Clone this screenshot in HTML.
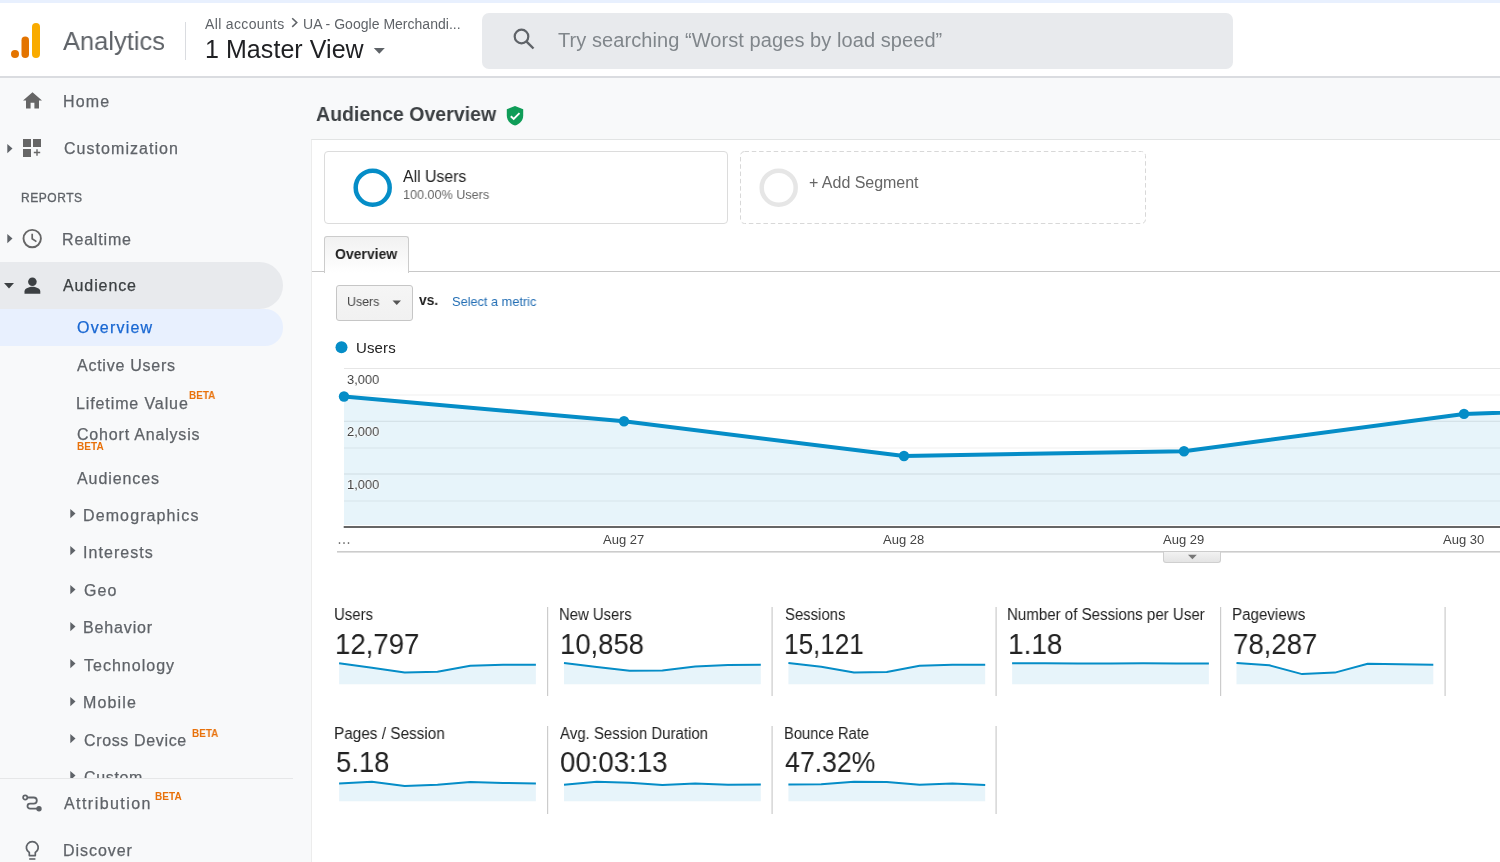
<!DOCTYPE html>
<html><head><meta charset="utf-8"><title>Analytics</title>
<style>
html,body{margin:0;padding:0;width:1500px;height:862px;overflow:hidden;background:#fff;}
body{position:relative;font-family:"Liberation Sans",sans-serif;}
.a{position:absolute;}
.t{position:absolute;white-space:nowrap;will-change:transform;}
</style></head><body>
<div class="a" style="left:0px;top:0px;width:1500px;height:3px;background:#e8f0fe;"></div>
<div class="a" style="left:0px;top:77.5px;width:1500px;height:785px;background:#f8f9fa;"></div>
<div class="a" style="left:0px;top:76px;width:1500px;height:1.5px;background:#dadce0;"></div>
<svg class="a" style="left:0;top:0" width="60" height="76">
<circle cx="15" cy="54" r="4" fill="#e37400"/>
<rect x="21.5" y="36.5" width="7.5" height="21.5" rx="3.75" fill="#e37400"/>
<rect x="32" y="23" width="8" height="35" rx="4" fill="#f9ab00"/>
</svg>
<div class="t" style="left:63.40px;top:28.00px;font-size:26px;line-height:26px;color:#5f6368;transform:scaleX(0.9804);transform-origin:0 0;">Analytics</div>
<div class="a" style="left:185px;top:22px;width:1px;height:38px;background:#dadce0;"></div>
<div class="t" style="left:205.00px;top:17.00px;font-size:14px;line-height:14px;color:#5f6368;letter-spacing:0.347px;">All accounts</div>
<svg class="a" style="left:288px;top:16px" width="12" height="14"><path d="M4.2 2.3 L8.8 6.6 L4.2 10.9" fill="none" stroke="#5f6368" stroke-width="1.5"/></svg>
<div class="t" style="left:303.20px;top:17.00px;font-size:14px;line-height:14px;color:#5f6368;letter-spacing:0.019px;">UA - Google Merchandi...</div>
<div class="t" style="left:204.90px;top:37.00px;font-size:25px;line-height:25px;color:#202124;letter-spacing:0.060px;">1 Master View</div>
<svg class="a" style="left:373px;top:47.6px" width="13" height="7"><path d="M0.8 0 L11.8 0 L6.3 5.7 Z" fill="#5f6368"/></svg>
<div class="a" style="left:482px;top:13px;width:751px;height:55.5px;background:#e8eaed;border-radius:7px;"></div>
<svg class="a" style="left:510px;top:25.4px" width="28" height="28"><circle cx="11.5" cy="11.5" r="6.8" fill="none" stroke="#5f6368" stroke-width="2.2"/><path d="M16.3 16.3 L23.5 23.5" stroke="#5f6368" stroke-width="2.4"/></svg>
<div class="t" style="left:558.00px;top:30.00px;font-size:20px;line-height:20px;color:#80868b;letter-spacing:0.074px;">Try searching “Worst pages by load speed”</div>
<div class="a" style="left:0px;top:262px;width:283px;height:47px;background:#e8eaed;border-radius:0 23.5px 23.5px 0;"></div>
<div class="a" style="left:0px;top:309px;width:283px;height:36.5px;background:#e8f0fe;border-radius:0 18px 18px 0;"></div>
<svg class="a" style="left:22px;top:91px" width="22" height="19"><path d="M10.5 1.2 L1 9.6 L4 9.6 L4 17.6 L8.6 17.6 L8.6 11.8 L12.4 11.8 L12.4 17.6 L17 17.6 L17 9.6 L20 9.6 Z" fill="#666666"/></svg>
<div class="t" style="left:62.50px;top:94.00px;font-size:16px;line-height:16px;color:#5f6368;letter-spacing:1.140px;-webkit-text-stroke:0.25px currentColor;">Home</div>
<svg class="a" style="left:6.6px;top:143.6px" width="7" height="10"><path d="M0.3 0 L5.5 4.6 L0.3 9.2 Z" fill="#5f6368"/></svg>
<svg class="a" style="left:22px;top:138px" width="22" height="20"><rect x="1" y="1" width="8" height="8" fill="#666666"/><rect x="11" y="1" width="8" height="8" fill="#666666"/><rect x="1" y="11" width="8" height="8" fill="#666666"/><path d="M15 11.3 V17.7 M11.8 14.5 H18.2" stroke="#666666" stroke-width="1.4"/></svg>
<div class="t" style="left:63.50px;top:141.00px;font-size:16px;line-height:16px;color:#5f6368;letter-spacing:1.044px;-webkit-text-stroke:0.25px currentColor;">Customization</div>
<div class="t" style="left:21.00px;top:192.00px;font-size:12px;line-height:12px;color:#5f6368;letter-spacing:0.535px;-webkit-text-stroke:0.3px currentColor;">REPORTS</div>
<svg class="a" style="left:7px;top:233.7px" width="7" height="10"><path d="M0.3 0 L5.5 4.6 L0.3 9.2 Z" fill="#5f6368"/></svg>
<svg class="a" style="left:21px;top:228px" width="22" height="22"><circle cx="11.2" cy="10.6" r="8.7" fill="none" stroke="#666666" stroke-width="1.9"/><path d="M11.2 5.8 V10.8 L15.4 13.6" fill="none" stroke="#666666" stroke-width="1.7"/></svg>
<div class="t" style="left:62.30px;top:232.00px;font-size:16px;line-height:16px;color:#5f6368;letter-spacing:0.838px;-webkit-text-stroke:0.25px currentColor;">Realtime</div>
<svg class="a" style="left:3px;top:282px" width="12" height="8"><path d="M1 1 L11 1 L6 6.5 Z" fill="#3c4043"/></svg>
<svg class="a" style="left:23px;top:276px" width="19" height="19"><circle cx="9.4" cy="5.8" r="4.3" fill="#3c4043"/><path d="M1.5 17.7 V15.5 C1.5 12.3 6.5 10.8 9.4 10.8 C12.3 10.8 17.3 12.3 17.3 15.5 V17.7 Z" fill="#3c4043"/></svg>
<div class="t" style="left:63.30px;top:278.00px;font-size:16px;line-height:16px;color:#3c4043;letter-spacing:0.897px;-webkit-text-stroke:0.25px currentColor;">Audience</div>
<div class="t" style="left:77.00px;top:320.00px;font-size:16px;line-height:16px;color:#1967d2;letter-spacing:1.196px;-webkit-text-stroke:0.25px currentColor;">Overview</div>
<div class="t" style="left:77.00px;top:358.00px;font-size:16px;line-height:16px;color:#5f6368;letter-spacing:0.746px;-webkit-text-stroke:0.25px currentColor;">Active Users</div>
<div class="t" style="left:76.00px;top:396.00px;font-size:16px;line-height:16px;color:#5f6368;letter-spacing:0.892px;-webkit-text-stroke:0.25px currentColor;">Lifetime Value</div>
<div class="t" style="left:189.00px;top:391.00px;font-size:10px;line-height:10px;color:#e8710a;font-weight:700;transform:scaleX(0.9902);transform-origin:0 0;">BETA</div>
<div class="t" style="left:77.00px;top:427.00px;font-size:16px;line-height:16px;color:#5f6368;letter-spacing:0.811px;-webkit-text-stroke:0.25px currentColor;">Cohort Analysis</div>
<div class="t" style="left:77.00px;top:442.00px;font-size:10px;line-height:10px;color:#e8710a;font-weight:700;letter-spacing:0.081px;">BETA</div>
<div class="t" style="left:77.00px;top:471.00px;font-size:16px;line-height:16px;color:#5f6368;letter-spacing:0.910px;-webkit-text-stroke:0.25px currentColor;">Audiences</div>
<svg class="a" style="left:69.8px;top:508.5px" width="7" height="10"><path d="M0.3 0 L5.5 4.6 L0.3 9.2 Z" fill="#5f6368"/></svg>
<div class="t" style="left:83.40px;top:508.00px;font-size:16px;line-height:16px;color:#5f6368;letter-spacing:1.113px;-webkit-text-stroke:0.25px currentColor;">Demographics</div>
<svg class="a" style="left:69.8px;top:546.4px" width="7" height="10"><path d="M0.3 0 L5.5 4.6 L0.3 9.2 Z" fill="#5f6368"/></svg>
<div class="t" style="left:83.40px;top:545.00px;font-size:16px;line-height:16px;color:#5f6368;letter-spacing:1.055px;-webkit-text-stroke:0.25px currentColor;">Interests</div>
<svg class="a" style="left:69.8px;top:584.8px" width="7" height="10"><path d="M0.3 0 L5.5 4.6 L0.3 9.2 Z" fill="#5f6368"/></svg>
<div class="t" style="left:84.40px;top:583.00px;font-size:16px;line-height:16px;color:#5f6368;letter-spacing:1.128px;-webkit-text-stroke:0.25px currentColor;">Geo</div>
<svg class="a" style="left:69.8px;top:621.5px" width="7" height="10"><path d="M0.3 0 L5.5 4.6 L0.3 9.2 Z" fill="#5f6368"/></svg>
<div class="t" style="left:83.40px;top:620.00px;font-size:16px;line-height:16px;color:#5f6368;letter-spacing:0.854px;-webkit-text-stroke:0.25px currentColor;">Behavior</div>
<svg class="a" style="left:69.8px;top:659.0999999999999px" width="7" height="10"><path d="M0.3 0 L5.5 4.6 L0.3 9.2 Z" fill="#5f6368"/></svg>
<div class="t" style="left:84.40px;top:658.00px;font-size:16px;line-height:16px;color:#5f6368;letter-spacing:1.017px;-webkit-text-stroke:0.25px currentColor;">Technology</div>
<svg class="a" style="left:69.8px;top:696.8px" width="7" height="10"><path d="M0.3 0 L5.5 4.6 L0.3 9.2 Z" fill="#5f6368"/></svg>
<div class="t" style="left:83.40px;top:695.00px;font-size:16px;line-height:16px;color:#5f6368;letter-spacing:1.133px;-webkit-text-stroke:0.25px currentColor;">Mobile</div>
<svg class="a" style="left:69.8px;top:734.0999999999999px" width="7" height="10"><path d="M0.3 0 L5.5 4.6 L0.3 9.2 Z" fill="#5f6368"/></svg>
<div class="t" style="left:84.40px;top:733.00px;font-size:16px;line-height:16px;color:#5f6368;letter-spacing:0.642px;-webkit-text-stroke:0.25px currentColor;">Cross Device</div>
<div class="t" style="left:192.40px;top:729.00px;font-size:10px;line-height:10px;color:#e8710a;font-weight:700;transform:scaleX(0.9902);transform-origin:0 0;">BETA</div>
<div class="a" style="left:0;top:0;width:311px;height:778px;overflow:hidden"><svg class="a" style="left:69.8px;top:770.7px" width="7" height="10"><path d="M0.3 0 L5.5 4.6 L0.3 9.2 Z" fill="#5f6368"/></svg>
<div class="t" style="left:84.40px;top:770.00px;font-size:16px;line-height:16px;color:#5f6368;letter-spacing:0.641px;-webkit-text-stroke:0.25px currentColor;">Custom</div>
</div>
<div class="a" style="left:0px;top:777.8px;width:293px;height:1.4px;background:#e6e7e8;"></div>
<svg class="a" style="left:21px;top:793px" width="22" height="22"><circle cx="4.2" cy="4.5" r="2.1" fill="none" stroke="#5f6368" stroke-width="1.7"/><path d="M6.4 4.5 H12.7 A3.1 3.1 0 0 1 12.7 10.7 H9 A2.5 2.5 0 0 0 9 15.7 H16" fill="none" stroke="#5f6368" stroke-width="1.8"/><circle cx="18" cy="15.7" r="2.7" fill="#5f6368"/></svg>
<div class="t" style="left:63.50px;top:796.00px;font-size:16px;line-height:16px;color:#5f6368;letter-spacing:1.436px;-webkit-text-stroke:0.25px currentColor;">Attribution</div>
<div class="t" style="left:154.50px;top:792.00px;font-size:10px;line-height:10px;color:#e8710a;font-weight:700;letter-spacing:0.081px;">BETA</div>
<svg class="a" style="left:22px;top:838px" width="20" height="24"><path d="M7.3 17.6 V14.6 A5.9 5.9 0 1 1 13.3 14.6 V17.6 Z" fill="none" stroke="#5f6368" stroke-width="1.7" stroke-linejoin="round"/><path d="M7.2 21 H13.4" stroke="#5f6368" stroke-width="1.6"/></svg>
<div class="t" style="left:62.50px;top:843.00px;font-size:16px;line-height:16px;color:#5f6368;letter-spacing:0.942px;-webkit-text-stroke:0.25px currentColor;">Discover</div>
<div class="a" style="left:311px;top:139px;width:1189px;height:723px;background:#ffffff;border-left:1px solid #ececec;border-top:1px solid #e2e4e4;box-sizing:border-box;"></div>
<div class="t" style="left:315.70px;top:103.00px;font-size:21px;line-height:21px;color:#3c4043;font-weight:700;transform:scaleX(0.9295);transform-origin:0 0;">Audience Overview</div>
<svg class="a" style="left:505px;top:105px" width="20" height="22"><path d="M10 1 L18.2 4.3 V10.5 C18.2 15.3 14.8 19.3 10 20.5 C5.2 19.3 1.8 15.3 1.8 10.5 V4.3 Z" fill="#0f9d58"/><path d="M5.8 11.2 L8.7 14 L14.5 8.2" fill="none" stroke="#fff" stroke-width="1.9"/></svg>
<div class="a" style="left:324px;top:151px;width:404px;height:73px;background:#fff;border:1px solid #dcdcdc;border-radius:4px;box-sizing:border-box;"></div>
<svg class="a" style="left:350px;top:165px" width="46" height="46"><circle cx="22.7" cy="22.7" r="17" fill="none" stroke="#058dc7" stroke-width="4.5"/></svg>
<div class="t" style="left:402.70px;top:169.00px;font-size:16px;line-height:16px;color:#222222;transform:scaleX(0.9889);transform-origin:0 0;">All Users</div>
<div class="t" style="left:402.70px;top:188.00px;font-size:13px;line-height:13px;color:#666666;transform:scaleX(0.9689);transform-origin:0 0;">100.00% Users</div>
<svg class="a" style="left:0;top:0" width="1500" height="240"><rect x="740.5" y="151.5" width="405" height="72" rx="4" fill="#fff" stroke="#d8d8d8" stroke-width="1" stroke-dasharray="4.5 2.8"/></svg>
<svg class="a" style="left:756px;top:165px" width="46" height="46"><circle cx="22.7" cy="22.7" r="17" fill="none" stroke="#e6e6e6" stroke-width="4.5"/></svg>
<div class="t" style="left:809.00px;top:175.00px;font-size:16px;line-height:16px;color:#666666;letter-spacing:-0.025px;">+ Add Segment</div>
<div class="a" style="left:312px;top:271px;width:1188px;height:1px;background:#c8c8c8;"></div>
<div class="a" style="left:324px;top:236px;width:85px;height:37px;background:linear-gradient(#f1f1f1,#ffffff);border:1px solid #cccccc;border-bottom:none;border-radius:3px 3px 0 0;box-sizing:border-box;"></div>
<div class="t" style="left:334.80px;top:246.00px;font-size:15px;line-height:15px;color:#222222;font-weight:700;transform:scaleX(0.9323);transform-origin:0 0;">Overview</div>
<div class="a" style="left:336px;top:284.5px;width:77px;height:36px;background:linear-gradient(#f5f5f5,#f1f1f1);border:1px solid #c6c6c6;border-radius:3px;box-sizing:border-box;"></div>
<div class="t" style="left:347.25px;top:295.00px;font-size:13px;line-height:13px;color:#444444;transform:scaleX(0.9508);transform-origin:0 0;">Users</div>
<svg class="a" style="left:391.5px;top:300.3px" width="10" height="6"><path d="M0.5 0.5 L9 0.5 L4.75 5 Z" fill="#555"/></svg>
<div class="t" style="left:418.60px;top:293.00px;font-size:14px;line-height:14px;color:#222222;font-weight:700;transform:scaleX(0.9853);transform-origin:0 0;">vs.</div>
<div class="t" style="left:451.50px;top:295.00px;font-size:13px;line-height:13px;color:#236eb4;transform:scaleX(0.9807);transform-origin:0 0;">Select a metric</div>
<svg class="a" style="left:334px;top:340px" width="15" height="15"><circle cx="7.5" cy="7.3" r="6" fill="#058dc7"/></svg>
<div class="t" style="left:356.00px;top:340.00px;font-size:15px;line-height:15px;color:#222222;letter-spacing:0.133px;">Users</div>
<svg class="a" style="left:0;top:0" width="1500" height="862"><defs><clipPath id="cc"><rect x="336" y="360" width="1164" height="180"/></clipPath></defs><rect x="344" y="368.0" width="1156" height="1" fill="#e6e6e6"/><rect x="344" y="394.5" width="1156" height="1" fill="#efefef"/><rect x="344" y="420.8" width="1156" height="1" fill="#e6e6e6"/><rect x="344" y="447.5" width="1156" height="1" fill="#efefef"/><rect x="344" y="473.5" width="1156" height="1" fill="#e6e6e6"/><rect x="344" y="500.5" width="1156" height="1" fill="#efefef"/><g clip-path="url(#cc)"><path d="M344,396.5 L624,421.3 L904,456 L1184,451.2 L1464,413.9 L1744,404.7 L1744,525 L344,525 Z" fill="#058dc7" fill-opacity="0.095"/><path d="M344,396.5 L624,421.3 L904,456 L1184,451.2 L1464,413.9 L1744,404.7" fill="none" stroke="#058dc7" stroke-width="4" stroke-linejoin="round"/><circle cx="344" cy="396.5" r="5.2" fill="#058dc7"/><circle cx="624" cy="421.3" r="5.2" fill="#058dc7"/><circle cx="904" cy="456" r="5.2" fill="#058dc7"/><circle cx="1184" cy="451.2" r="5.2" fill="#058dc7"/><circle cx="1464" cy="413.9" r="5.2" fill="#058dc7"/><circle cx="1744" cy="404.7" r="5.2" fill="#058dc7"/></g><rect x="343.7" y="526" width="1156.3" height="2" fill="#666666"/><rect x="337" y="551" width="1163" height="1.6" fill="#cccccc"/><rect x="338.8" y="542.3" width="1.4" height="1.5" fill="#555"/><rect x="343.3" y="542.3" width="1.4" height="1.5" fill="#555"/><rect x="347.8" y="542.3" width="1.4" height="1.5" fill="#555"/></svg>
<div class="t" style="left:347.30px;top:373.00px;font-size:13px;line-height:13px;color:#444444;transform:scaleX(0.9907);transform-origin:0 0;text-shadow:0 0 2px #fff,0 0 2px #fff,0 0 2px #fff;">3,000</div>
<div class="t" style="left:347.30px;top:425.00px;font-size:13px;line-height:13px;color:#444444;transform:scaleX(0.9907);transform-origin:0 0;text-shadow:0 0 2px #fff,0 0 2px #fff,0 0 2px #fff;">2,000</div>
<div class="t" style="left:347.30px;top:478.00px;font-size:13px;line-height:13px;color:#444444;transform:scaleX(0.9907);transform-origin:0 0;text-shadow:0 0 2px #fff,0 0 2px #fff,0 0 2px #fff;">1,000</div>
<div class="t" style="left:603.40px;top:533.00px;font-size:13px;line-height:13px;color:#444444;">Aug 27</div>
<div class="t" style="left:883.40px;top:533.00px;font-size:13px;line-height:13px;color:#444444;">Aug 28</div>
<div class="t" style="left:1163.40px;top:533.00px;font-size:13px;line-height:13px;color:#444444;">Aug 29</div>
<div class="t" style="left:1443.40px;top:533.00px;font-size:13px;line-height:13px;color:#444444;">Aug 30</div>
<div class="a" style="left:1163px;top:551.5px;width:58px;height:11.5px;background:linear-gradient(#f2f2f2,#e4e4e4);border:1px solid #cfcfcf;border-top:none;border-radius:0 0 3px 3px;box-sizing:border-box;"></div>
<svg class="a" style="left:1187px;top:554px" width="11" height="7"><path d="M1 0.8 L9.8 0.8 L5.4 5.3 Z" fill="#777"/></svg>
<div class="t" style="left:334.37px;top:607.00px;font-size:16px;line-height:16px;color:#222222;transform:scaleX(0.9343);transform-origin:0 0;">Users</div>
<div class="t" style="left:335.40px;top:630.00px;font-size:29px;line-height:29px;color:#222222;transform:scaleX(0.9513);transform-origin:0 0;">12,797</div>
<div class="t" style="left:559.27px;top:607.00px;font-size:16px;line-height:16px;color:#222222;transform:scaleX(0.9283);transform-origin:0 0;">New Users</div>
<div class="t" style="left:559.81px;top:630.00px;font-size:29px;line-height:29px;color:#222222;transform:scaleX(0.9466);transform-origin:0 0;">10,858</div>
<div class="t" style="left:784.60px;top:607.00px;font-size:16px;line-height:16px;color:#222222;transform:scaleX(0.9303);transform-origin:0 0;">Sessions</div>
<div class="t" style="left:784.45px;top:630.00px;font-size:29px;line-height:29px;color:#222222;transform:scaleX(0.8998);transform-origin:0 0;">15,121</div>
<div class="t" style="left:1007.36px;top:607.00px;font-size:16px;line-height:16px;color:#222222;transform:scaleX(0.9421);transform-origin:0 0;">Number of Sessions per User</div>
<div class="t" style="left:1008.37px;top:630.00px;font-size:29px;line-height:29px;color:#222222;transform:scaleX(0.9641);transform-origin:0 0;">1.18</div>
<div class="t" style="left:1231.75px;top:607.00px;font-size:16px;line-height:16px;color:#222222;transform:scaleX(0.9466);transform-origin:0 0;">Pageviews</div>
<div class="t" style="left:1232.75px;top:630.00px;font-size:29px;line-height:29px;color:#222222;transform:scaleX(0.9507);transform-origin:0 0;">78,287</div>
<div class="t" style="left:334.34px;top:726.00px;font-size:16px;line-height:16px;color:#222222;transform:scaleX(0.9584);transform-origin:0 0;">Pages / Session</div>
<div class="t" style="left:336.35px;top:748.00px;font-size:29px;line-height:29px;color:#222222;transform:scaleX(0.9463);transform-origin:0 0;">5.18</div>
<div class="t" style="left:560.20px;top:726.00px;font-size:16px;line-height:16px;color:#222222;transform:scaleX(0.9369);transform-origin:0 0;">Avg. Session Duration</div>
<div class="t" style="left:559.95px;top:748.00px;font-size:29px;line-height:29px;color:#222222;transform:scaleX(0.9525);transform-origin:0 0;">00:03:13</div>
<div class="t" style="left:783.68px;top:726.00px;font-size:16px;line-height:16px;color:#222222;transform:scaleX(0.9191);transform-origin:0 0;">Bounce Rate</div>
<div class="t" style="left:784.50px;top:748.00px;font-size:29px;line-height:29px;color:#222222;transform:scaleX(0.9193);transform-origin:0 0;">47.32%</div>
<svg class="a" style="left:0;top:0" width="1500" height="862"><path d="M339.1,663.2 L371.9,667.8 L404.7,672.4 L437.5,671.7 L470.3,665.8 L503.1,664.7 L535.9,664.7 L535.9,684.2 L339.1,684.2 Z" fill="#058dc7" fill-opacity="0.095"/><path d="M339.1,663.2 L371.9,667.8 L404.7,672.4 L437.5,671.7 L470.3,665.8 L503.1,664.7 L535.9,664.7" fill="none" stroke="#058dc7" stroke-width="2" stroke-linejoin="round"/><rect x="547.0" y="607" width="1.2" height="89" fill="#cccccc"/><path d="M564.0,663.1 L596.8,667.0 L629.6,670.8 L662.4,670.4 L695.2,666.4 L728.0,665.0 L760.8,664.8 L760.8,684.2 L564.0,684.2 Z" fill="#058dc7" fill-opacity="0.095"/><path d="M564.0,663.1 L596.8,667.0 L629.6,670.8 L662.4,670.4 L695.2,666.4 L728.0,665.0 L760.8,664.8" fill="none" stroke="#058dc7" stroke-width="2" stroke-linejoin="round"/><rect x="771.5" y="607" width="1.2" height="89" fill="#cccccc"/><path d="M788.4,663.1 L821.2,666.7 L854.0,672.6 L886.8,671.9 L919.6,665.7 L952.4,664.8 L985.2,664.8 L985.2,684.2 L788.4,684.2 Z" fill="#058dc7" fill-opacity="0.095"/><path d="M788.4,663.1 L821.2,666.7 L854.0,672.6 L886.8,671.9 L919.6,665.7 L952.4,664.8 L985.2,664.8" fill="none" stroke="#058dc7" stroke-width="2" stroke-linejoin="round"/><rect x="995.5" y="607" width="1.2" height="89" fill="#cccccc"/><path d="M1012.1,663.2 L1044.9,663.3 L1077.7,663.6 L1110.5,663.6 L1143.3,663.2 L1176.1,663.4 L1208.9,663.4 L1208.9,684.2 L1012.1,684.2 Z" fill="#058dc7" fill-opacity="0.095"/><path d="M1012.1,663.2 L1044.9,663.3 L1077.7,663.6 L1110.5,663.6 L1143.3,663.2 L1176.1,663.4 L1208.9,663.4" fill="none" stroke="#058dc7" stroke-width="2" stroke-linejoin="round"/><rect x="1220.0" y="607" width="1.2" height="89" fill="#cccccc"/><path d="M1236.5,663.1 L1269.3,665.3 L1302.1,674.1 L1334.9,672.6 L1367.7,663.8 L1400.5,664.2 L1433.3,664.8 L1433.3,684.2 L1236.5,684.2 Z" fill="#058dc7" fill-opacity="0.095"/><path d="M1236.5,663.1 L1269.3,665.3 L1302.1,674.1 L1334.9,672.6 L1367.7,663.8 L1400.5,664.2 L1433.3,664.8" fill="none" stroke="#058dc7" stroke-width="2" stroke-linejoin="round"/><rect x="1444.5" y="607" width="1.2" height="89" fill="#cccccc"/><path d="M339.1,783.5 L371.9,781.7 L404.7,786.1 L437.5,784.7 L470.3,782.0 L503.1,782.9 L535.9,783.5 L535.9,801.2 L339.1,801.2 Z" fill="#058dc7" fill-opacity="0.095"/><path d="M339.1,783.5 L371.9,781.7 L404.7,786.1 L437.5,784.7 L470.3,782.0 L503.1,782.9 L535.9,783.5" fill="none" stroke="#058dc7" stroke-width="2" stroke-linejoin="round"/><rect x="547.0" y="726" width="1.2" height="88" fill="#cccccc"/><path d="M564.0,784.7 L596.8,781.7 L629.6,782.8 L662.4,785.0 L695.2,783.5 L728.0,784.7 L760.8,784.4 L760.8,801.2 L564.0,801.2 Z" fill="#058dc7" fill-opacity="0.095"/><path d="M564.0,784.7 L596.8,781.7 L629.6,782.8 L662.4,785.0 L695.2,783.5 L728.0,784.7 L760.8,784.4" fill="none" stroke="#058dc7" stroke-width="2" stroke-linejoin="round"/><rect x="771.5" y="726" width="1.2" height="88" fill="#cccccc"/><path d="M788.4,784.4 L821.2,784.2 L854.0,781.7 L886.8,782.0 L919.6,784.7 L952.4,783.5 L985.2,785.0 L985.2,801.2 L788.4,801.2 Z" fill="#058dc7" fill-opacity="0.095"/><path d="M788.4,784.4 L821.2,784.2 L854.0,781.7 L886.8,782.0 L919.6,784.7 L952.4,783.5 L985.2,785.0" fill="none" stroke="#058dc7" stroke-width="2" stroke-linejoin="round"/><rect x="995.5" y="726" width="1.2" height="88" fill="#cccccc"/></svg>
</body></html>
